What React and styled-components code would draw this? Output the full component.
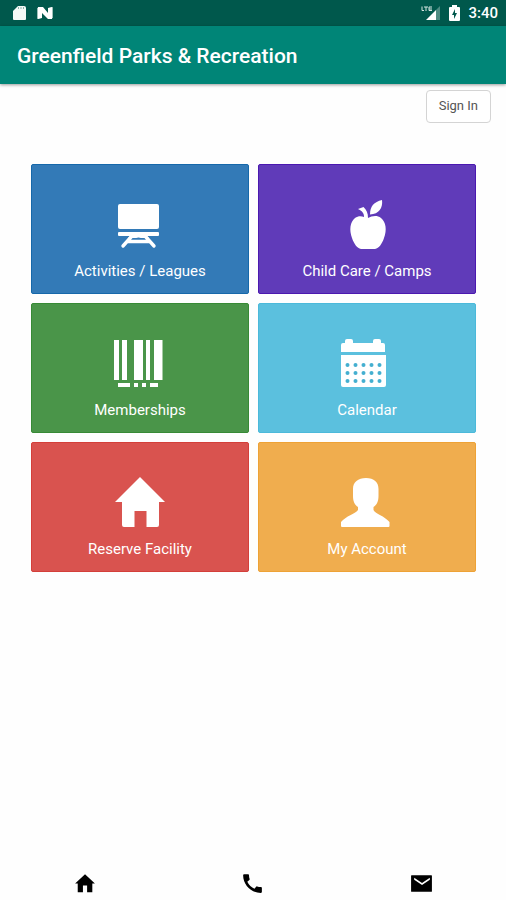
import React from "react";
import styled, { createGlobalStyle } from "styled-components";

const GlobalStyle = createGlobalStyle`
  * { box-sizing: border-box; }
  body { margin: 0; background: #fefefe; font-family: Roboto, sans-serif; }
`;

const Screen = styled.div`
  display: flex;
  flex-direction: column;
  min-height: 100vh;
`;

const StatusBar = styled.div`
  display: flex;
  align-items: center;
  justify-content: space-between;
  height: 26px;
  padding: 0 8px 0 12px;
  background: #00584c;
  color: #fff;
`;

const StatusGroup = styled.div`
  display: flex;
  align-items: center;
  gap: ${(p) => p.$gap}px;
`;

const Clock = styled.time`
  font-size: 15px;
  line-height: 26px;
  font-weight: 500;
`;

const AppBar = styled.header`
  display: flex;
  align-items: center;
  height: 58px;
  padding: 2px 17px 0;
  background: #008577;
  box-shadow: 0 1px 3px rgba(0, 0, 0, 0.4);
`;

const Title = styled.h1`
  margin: 0;
  color: #fff;
  font-size: 21px;
  line-height: 28px;
  font-weight: 500;
`;

const Main = styled.main`
  flex: 1;
`;

const AccountRow = styled.div`
  display: flex;
  justify-content: flex-end;
  padding: 6px 15px 0;
`;

const SignInButton = styled.button`
  height: 33px;
  padding: 0 12px 2px;
  border: 1px solid #d4d4d4;
  border-radius: 4px;
  background: #fff;
  color: #555;
  font: 400 13px/20px Roboto, sans-serif;
`;

const TileGrid = styled.nav`
  display: grid;
  grid-template-columns: 1fr 1fr;
  gap: 9px;
  padding: 41px 30px 0 31px;
`;

const Tile = styled.button`
  display: flex;
  flex-direction: column;
  align-items: center;
  gap: 10px;
  height: 130px;
  padding: 34px 0 0;
  border: 1px solid ${(p) => p.$border};
  border-radius: 2px;
  background: ${(p) => p.$color};
  color: #fff;
  font: 400 15px/20px Roboto, sans-serif;
`;

const TileIcon = styled.svg`
  display: block;
  width: 52px;
  height: 52px;
  fill: currentColor;
`;

const BottomNav = styled.nav`
  display: grid;
  grid-template-columns: repeat(3, 1fr);
  height: 34px;
`;

const NavLink = styled.a`
  display: flex;
  align-items: center;
  justify-content: center;
  color: #000;
`;

const NavIcon = styled.svg`
  width: 25px;
  height: 25px;
  fill: currentColor;
`;

const BoardIcon = () => (
  <>
    <rect x="4" y="5" width="41" height="25" rx="2" />
    <rect x="4" y="33" width="41" height="4" rx="1" />
    <path d="M18 37 9 47M31 37l9 10M14 42.5h21" fill="none" stroke="currentColor" strokeWidth="3.4" strokeLinecap="round" />
    <path d="M17 36h15l3 3H14z" />
    <path d="M20 40q4.500-3 9 0z" fill="#337ab7" />
  </>
);

const AppleIcon = () => (
  <>
    <path d="M29 15.500C29 7 33 3 41 1c1 8-3 14-12 14.500z" />
    <path d="M17 10 22.500 8c3 3 4.500 6 4.500 11 4-2 9-3 13 0 5 4 6 12 3 20-2 6-5 10-9 11H20c-4-1-7-5-9-11-3-8-2-16 3-20 3-2 6-2 9-1 0-4-2-6-6-8z" />
  </>
);

const BarcodeIcon = () => (
  <path d="M0 2h5v40H0zM8 2h5v40H8zM20 2h9v40h-9zM32 2h4v40h-4zM40 2h8.500v40H40zM4 45h12v4H4zM20 45h4v4h-4zM28 45h4v4h-4zM36 45h8v4h-8z" />
);

const CalendarIcon = () => (
  <>
    <path d="M0 14V7q0-2 2-2h2V3q0-2 2-2h4q2 0 2 2v2h20V3q0-2 2-2h4q2 0 2 2v2h2q2 0 2 2v7z" />
    <path d="M0 17h45v30q0 2-2 2H2q-2 0-2-2z" />
    {[27, 35, 43].map((y) =>
      [6.5, 14.5, 22.5, 30.5, 38.5].map((x) => (
        <circle key={`${x}-${y}`} cx={x} cy={y} r="2" fill="#44afd0" />
      ))
    )}
  </>
);

const HouseIcon = () => (
  <path d="M26 0 51 25H45V48q0 2-2 2H32.500V34H20.500V50H10q-2 0-2-2V25H1z" />
);

const PersonIcon = () => (
  <path d="M25 1c8 0 12.500 4 12.500 11v7c0 6-2 9-5 11v3c2 4 11 6 16 12v4q0 1-1 1H1q-1 0-1-1v-4c5-6 14-8 17-12v-3c-3-2-5-5-5-11v-7C12 5 17 1 25 1z" />
);

const tiles = [
  { label: "Activities / Leagues", color: "#337ab7", border: "#1668aa", Icon: BoardIcon },
  { label: "Child Care / Camps", color: "#603bb9", border: "#4b18b0", Icon: AppleIcon },
  { label: "Memberships", color: "#4a9549", border: "#378a35", Icon: BarcodeIcon },
  { label: "Calendar", color: "#5bc0de", border: "#4bb9da", Icon: CalendarIcon },
  { label: "Reserve Facility", color: "#d9534f", border: "#d43f3a", Icon: HouseIcon },
  { label: "My Account", color: "#f0ad4e", border: "#eea236", Icon: PersonIcon },
];

const links = [
  {
    label: "Home",
    href: "#home",
    d: "M12.500 3 22 12h-2.500v8.500h-5V14h-4v6.500h-5V12H3z",
  },
  {
    label: "Call",
    href: "#call",
    d: "M20.010 15.380c-1.230 0-2.420-.2-3.530-.560a.977.977 0 0 0-1.010.240l-1.570 1.970c-2.830-1.350-5.480-3.900-6.890-6.830l1.950-1.660c.27-.28.350-.67.240-1.020-.37-1.110-.56-2.300-.56-3.530 0-.54-.45-.99-.99-.99H4.190C3.650 3 3 3.240 3 3.990 3 13.280 10.730 21 20.010 21c.71 0 .99-.63.99-1.180v-3.450c0-.54-.45-.99-.99-.99z",
  },
  {
    label: "Mail",
    href: "#mail",
    d: "M21.500 4h-19Q2 4 2 4.500v15q0 .5.500.5h19q.5 0 .5-.5v-15q0-.5-.5-.5zM20 8.500 12.500 13.500 5 8.500V6.500l7.500 5 7.500-5z",
  },
];

export default function App() {
  return (
    <Screen>
      <GlobalStyle />
      <StatusBar>
        <StatusGroup $gap={10}>
          <svg width="15" height="16" viewBox="0 0 15 16" fill="#f4faf7" aria-hidden="true">
            <path d="M1 6 6 1h6q2 0 2 2v11q0 1-1 1H2q-1 0-1-1z" />
            <path d="M6.500 2v2M9 2v2M11.500 2v2" stroke="#8db3ab" />
          </svg>
          <svg width="16" height="14" viewBox="0 0 16 14" aria-hidden="true">
            <path d="M0 2l4-1v11l-4 1zM12 2l4-1v11l-4 1z" fill="#9dc0b9" />
            <path d="M1 1h5l5 6V2l4-1v12h-4L5 7v5l-4 1z" fill="#fff" />
          </svg>
        </StatusGroup>
        <StatusGroup $gap={8}>
          <svg width="20" height="16" viewBox="0 0 20 16" aria-hidden="true">
            <path d="M5 15 15 5v10z" fill="#fff" />
            <path d="M15 5l4-4v14h-4z" fill="#4f8c83" />
            <path d="M1 1.500v4h2M3 2h4M5 2v4M11 2H8v3.500h3M8 4h3" fill="none" stroke="#d5e5e1" />
          </svg>
          <svg width="11" height="17" viewBox="0 0 11 17" aria-hidden="true">
            <path d="M3 0h5v2h2q1 0 1 1v12q0 1-1 1H1q-1 0-1-1V3q0-1 1-1h2z" fill="#fff" />
            <path d="M6 4 3 10h2v4l3-6H6z" fill="#00584c" />
          </svg>
          <Clock>3:40</Clock>
        </StatusGroup>
      </StatusBar>
      <AppBar>
        <Title>Greenfield Parks &amp; Recreation</Title>
      </AppBar>
      <Main>
        <AccountRow>
          <SignInButton type="button">Sign In</SignInButton>
        </AccountRow>
        <TileGrid aria-label="Services">
          {tiles.map(({ label, color, border, Icon }) => (
            <Tile key={label} type="button" $color={color} $border={border}>
              <TileIcon viewBox="0 0 52 52" aria-hidden="true">
                <Icon />
              </TileIcon>
              {label}
            </Tile>
          ))}
        </TileGrid>
      </Main>
      <BottomNav aria-label="Shortcuts">
        {links.map(({ label, href, d }) => (
          <NavLink key={label} href={href} aria-label={label}>
            <NavIcon viewBox="0 0 24 24" aria-hidden="true">
              <path fillRule="evenodd" d={d} />
            </NavIcon>
          </NavLink>
        ))}
      </BottomNav>
    </Screen>
  );
}
